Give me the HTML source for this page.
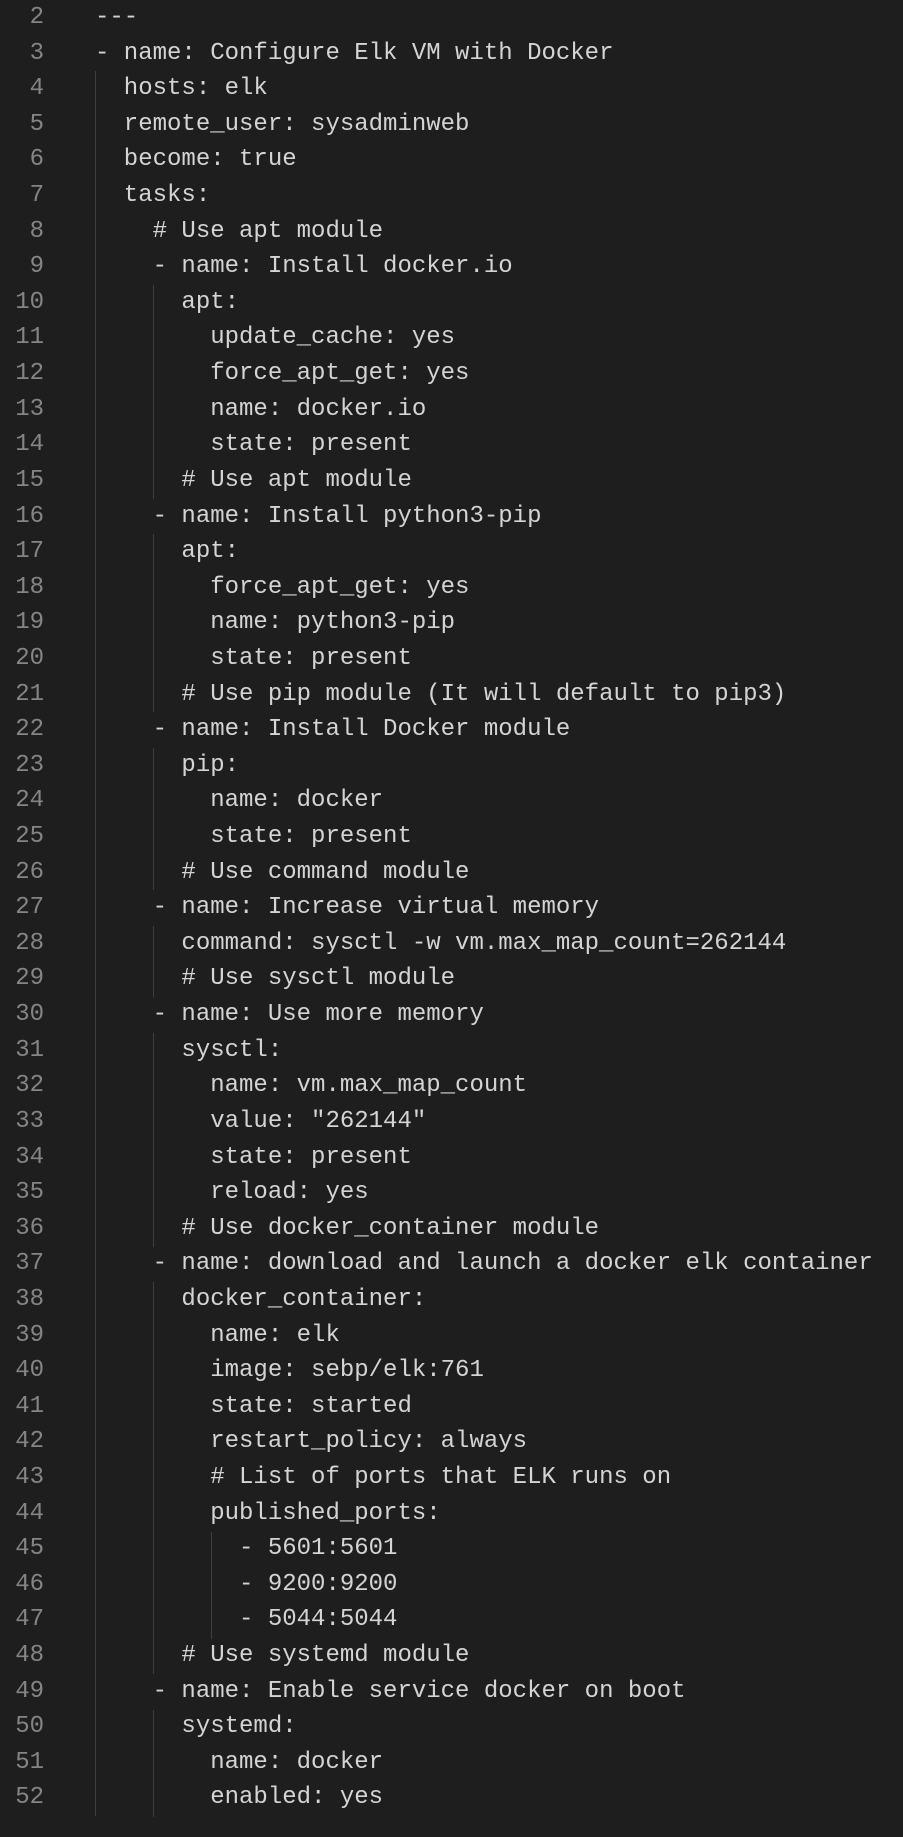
<!DOCTYPE html>
<html><head><meta charset="utf-8"><style>
html,body{margin:0;padding:0;background:#1e1e1e;width:903px;height:1837px;overflow:hidden;position:relative}
#c{position:absolute;left:0;top:0px;width:903px}
.l{position:relative;height:35.62px;line-height:35.62px;font-family:"Liberation Mono",monospace;font-size:24px;white-space:pre;color:#d4d4d4}
.l b{font-weight:normal;position:absolute;left:0;width:44px;text-align:right;color:#858585}
.l i{font-style:normal;position:absolute;left:95px}
.g{position:absolute;width:1px;background:#404040}
</style></head><body>
<div id="c">
<div class="l"><b>2</b><i>---</i></div>
<div class="l"><b>3</b><i>- name: Configure Elk VM with Docker</i></div>
<div class="l"><b>4</b><i>  hosts: elk</i></div>
<div class="l"><b>5</b><i>  remote_user: sysadminweb</i></div>
<div class="l"><b>6</b><i>  become: true</i></div>
<div class="l"><b>7</b><i>  tasks:</i></div>
<div class="l"><b>8</b><i>    # Use apt module</i></div>
<div class="l"><b>9</b><i>    - name: Install docker.io</i></div>
<div class="l"><b>10</b><i>      apt:</i></div>
<div class="l"><b>11</b><i>        update_cache: yes</i></div>
<div class="l"><b>12</b><i>        force_apt_get: yes</i></div>
<div class="l"><b>13</b><i>        name: docker.io</i></div>
<div class="l"><b>14</b><i>        state: present</i></div>
<div class="l"><b>15</b><i>      # Use apt module</i></div>
<div class="l"><b>16</b><i>    - name: Install python3-pip</i></div>
<div class="l"><b>17</b><i>      apt:</i></div>
<div class="l"><b>18</b><i>        force_apt_get: yes</i></div>
<div class="l"><b>19</b><i>        name: python3-pip</i></div>
<div class="l"><b>20</b><i>        state: present</i></div>
<div class="l"><b>21</b><i>      # Use pip module (It will default to pip3)</i></div>
<div class="l"><b>22</b><i>    - name: Install Docker module</i></div>
<div class="l"><b>23</b><i>      pip:</i></div>
<div class="l"><b>24</b><i>        name: docker</i></div>
<div class="l"><b>25</b><i>        state: present</i></div>
<div class="l"><b>26</b><i>      # Use command module</i></div>
<div class="l"><b>27</b><i>    - name: Increase virtual memory</i></div>
<div class="l"><b>28</b><i>      command: sysctl -w vm.max_map_count=262144</i></div>
<div class="l"><b>29</b><i>      # Use sysctl module</i></div>
<div class="l"><b>30</b><i>    - name: Use more memory</i></div>
<div class="l"><b>31</b><i>      sysctl:</i></div>
<div class="l"><b>32</b><i>        name: vm.max_map_count</i></div>
<div class="l"><b>33</b><i>        value: "262144"</i></div>
<div class="l"><b>34</b><i>        state: present</i></div>
<div class="l"><b>35</b><i>        reload: yes</i></div>
<div class="l"><b>36</b><i>      # Use docker_container module</i></div>
<div class="l"><b>37</b><i>    - name: download and launch a docker elk container</i></div>
<div class="l"><b>38</b><i>      docker_container:</i></div>
<div class="l"><b>39</b><i>        name: elk</i></div>
<div class="l"><b>40</b><i>        image: sebp/elk:761</i></div>
<div class="l"><b>41</b><i>        state: started</i></div>
<div class="l"><b>42</b><i>        restart_policy: always</i></div>
<div class="l"><b>43</b><i>        # List of ports that ELK runs on</i></div>
<div class="l"><b>44</b><i>        published_ports:</i></div>
<div class="l"><b>45</b><i>          - 5601:5601</i></div>
<div class="l"><b>46</b><i>          - 9200:9200</i></div>
<div class="l"><b>47</b><i>          - 5044:5044</i></div>
<div class="l"><b>48</b><i>      # Use systemd module</i></div>
<div class="l"><b>49</b><i>    - name: Enable service docker on boot</i></div>
<div class="l"><b>50</b><i>      systemd:</i></div>
<div class="l"><b>51</b><i>        name: docker</i></div>
<div class="l"><b>52</b><i>        enabled: yes</i></div>
</div>
<div class="g" style="left:95px;top:71px;height:1745px"></div>
<div class="g" style="left:153px;top:285px;height:214px"></div>
<div class="g" style="left:153px;top:534px;height:178px"></div>
<div class="g" style="left:153px;top:748px;height:142px"></div>
<div class="g" style="left:153px;top:926px;height:71px"></div>
<div class="g" style="left:153px;top:1033px;height:214px"></div>
<div class="g" style="left:153px;top:1282px;height:392px"></div>
<div class="g" style="left:153px;top:1710px;height:107px"></div>
<div class="g" style="left:211px;top:1532px;height:107px"></div>
</body></html>
